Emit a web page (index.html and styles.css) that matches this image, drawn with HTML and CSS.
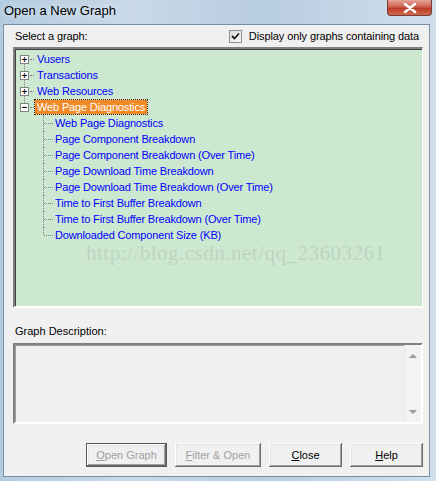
FILE: index.html
```html
<!DOCTYPE html>
<html lang="en">
<head>
    <meta charset="UTF-8">
    <title>Open a New Graph</title>
    <link rel="stylesheet" href="styles.css">
</head>
<body>

<div class="window">
    <div class="titlebar">
        <span class="title">Open a New Graph</span>
        <div class="close-btn">
            <svg width="14" height="10" viewBox="0 0 14 10"><path d="M2 1 L12 9 M12 1 L2 9" stroke="#fff" stroke-width="2.6" stroke-linecap="round"/></svg>
        </div>
    </div>

    <div class="client">
        <div class="header-row">
            <span>Select a graph:</span>
            <label class="check">
                <span class="checkbox">
                    <svg width="9" height="9" viewBox="0 0 9 9"><path d="M1 4 L3.5 6.5 L8 1.5" stroke="#1a1a1a" stroke-width="1.8" fill="none"/></svg>
                </span>
                Display only graphs containing data
            </label>
        </div>

        <div class="tree-box">
            <ul class="tree">
                <li class="node"><span class="exp">+</span><span class="stub"></span><span class="label">Vusers</span></li>
                <li class="node"><span class="exp">+</span><span class="stub"></span><span class="label">Transactions</span></li>
                <li class="node"><span class="exp">+</span><span class="stub"></span><span class="label">Web Resources</span></li>
                <li class="node open"><span class="exp">&minus;</span><span class="stub"></span><span class="label selected">Web Page Diagnostics</span></li>
            </ul>
            <ul class="children">
                <li>Web Page Diagnostics</li>
                <li>Page Component Breakdown</li>
                <li>Page Component Breakdown (Over Time)</li>
                <li>Page Download Time Breakdown</li>
                <li>Page Download Time Breakdown (Over Time)</li>
                <li>Time to First Buffer Breakdown</li>
                <li>Time to First Buffer Breakdown (Over Time)</li>
                <li>Downloaded Component Size (KB)</li>
            </ul>
            <div class="watermark">http://blog.csdn.net/qq_23603261</div>
        </div>

        <div class="desc-label">Graph Description:</div>
        <div class="desc-box">
            <div class="desc-text"></div>
            <div class="scrollbar">
                <span class="arrow up"></span>
                <span class="arrow down"></span>
            </div>
        </div>

        <div class="buttons">
            <button class="btn default" disabled><u>O</u>pen Graph</button>
            <button class="btn wide" disabled><u>F</u>ilter &amp; Open</button>
            <button class="btn"><u>C</u>lose</button>
            <button class="btn"><u>H</u>elp</button>
        </div>
    </div>
</div>

</body>
</html>
```

FILE: styles.css
```css
body, html {
    margin: 0;
    padding: 0;
    width: 436px;
    height: 481px;
    overflow: hidden;
    font-family: "Liberation Sans", Arial, sans-serif;
}
.window {
    width: 436px;
    height: 481px;
    box-sizing: border-box;
    padding: 0 6px 4px 3px;
    display: flex;
    flex-direction: column;
    background: linear-gradient(to right, #b3cbe0 0%, #c9d9e8 30%, #b8cde0 60%, #d0dfec 100%);
}
.titlebar {
    height: 24px;
    flex: none;
    display: flex;
    align-items: flex-start;
    justify-content: space-between;
}
.title {
    font-family: "Liberation Sans", Arial, sans-serif;
    font-size: 13px;
    color: #000;
    margin: 3px 0 0 1px;
    text-shadow: 0 0 6px #eef4fa;
}
.close-btn {
    width: 43px;
    height: 15px;
    margin-right: -2px;
    border: 1px solid #7a3a3a;
    border-top: none;
    border-radius: 0 0 4px 4px;
    background: linear-gradient(to bottom, #e7a59a 0%, #d0614f 45%, #bd3b26 55%, #d06a4f 100%);
    display: flex;
    align-items: center;
    justify-content: center;
}
.client {
    flex: 1;
    background: #f0f0f0;
    border: 1px solid #7b8fa3;
    padding: 0 6px 0 9px;
    display: flex;
    flex-direction: column;
    font-size: 11px;
    color: #000;
}
.header-row {
    height: 22px;
    flex: none;
    display: flex;
    align-items: center;
    justify-content: space-between;
    padding: 0 4px 0 2px;
    letter-spacing: -0.1px;
}
.check {
    display: flex;
    align-items: center;
    gap: 7px;
}
.checkbox {
    width: 11px;
    height: 11px;
    border: 1px solid #8e8f8f;
    background: linear-gradient(to bottom right, #dcdcdc, #fafafa);
    display: flex;
    align-items: center;
    justify-content: center;
}
.tree-box {
    height: 261px;
    flex: none;
    box-sizing: border-box;
    position: relative;
    background: #cde8d1;
    border-top: 2px solid #808080;
    border-left: 2px solid #808080;
    border-right: 1px solid #fff;
    border-bottom: 2px solid #fff;
    box-shadow: inset 1px 1px #404040;
    padding-top: 2px;
    font-size: 11px;
    letter-spacing: -0.15px;
    overflow: hidden;
}
.tree, .children {
    list-style: none;
    margin: 0;
    padding: 0;
    position: relative;
}
.node {
    height: 16px;
    display: flex;
    align-items: center;
    position: relative;
}
.node::before {
    content: "";
    position: absolute;
    left: 9px;
    top: 12px;
    height: 8px;
    border-left: 1px dotted #808080;
}
.node.open::before {
    display: none;
}
.exp {
    width: 7px;
    height: 7px;
    margin-left: 5px;
    border: 1px solid #808080;
    background: #fff;
    font-family: "DejaVu Sans Mono", monospace;
    font-size: 9px;
    font-weight: bold;
    line-height: 7px;
    text-align: center;
    letter-spacing: 0;
    color: #000;
    flex: none;
    overflow: hidden;
}
.stub {
    width: 4px;
    margin: 0 1px;
    border-top: 1px dotted #808080;
}
.label {
    color: #0000ff;
    padding: 0 2px;
    line-height: 14px;
}
.selected {
    background: #f08a28;
    color: #fff;
    outline: 1px dotted #402000;
}
.children li {
    height: 16px;
    line-height: 16px;
    padding-left: 40px;
    color: #0000ff;
    position: relative;
}
.children li::before {
    content: "";
    position: absolute;
    left: 28px;
    top: 0;
    height: 16px;
    border-left: 1px dotted #808080;
}
.children li:last-child::before {
    height: 8px;
}
.children li::after {
    content: "";
    position: absolute;
    left: 29px;
    top: 8px;
    width: 9px;
    border-top: 1px dotted #808080;
}
.watermark {
    position: absolute;
    left: 71px;
    top: 196px;
    font-family: "Liberation Serif", serif;
    font-size: 21px;
    line-height: 16px;
    letter-spacing: 0.5px;
    color: rgba(120, 140, 120, 0.22);
    white-space: nowrap;
}
.desc-label {
    margin-top: 16px;
    padding-left: 2px;
    height: 14px;
    line-height: 14px;
    flex: none;
}
.desc-box {
    height: 81px;
    margin-top: 5px;
    flex: none;
    box-sizing: border-box;
    display: flex;
    border-top: 2px solid #808080;
    border-left: 2px solid #808080;
    border-right: 2px solid #fff;
    border-bottom: 2px solid #fff;
    box-shadow: inset 1px 1px #a0a0a0;
    background: #f0f0f0;
}
.desc-text {
    flex: 1;
}
.scrollbar {
    width: 16px;
    border-left: 1px solid #e6e6e6;
    background: #f3f3f3;
    display: flex;
    flex-direction: column;
    justify-content: space-between;
    align-items: center;
    padding: 9px 0 8px;
}
.arrow {
    width: 0;
    height: 0;
    border-left: 4px solid transparent;
    border-right: 4px solid transparent;
}
.arrow.up {
    border-bottom: 4px solid #9a9a9a;
}
.arrow.down {
    border-top: 4px solid #9a9a9a;
}
.buttons {
    display: flex;
    justify-content: flex-end;
    gap: 8px;
    margin-top: 19px;
    padding-right: 0;
}
.btn {
    width: 73px;
    height: 24px;
    font-family: "Liberation Sans", Arial, sans-serif;
    font-size: 11px;
    color: #000;
    background: #f0f0f0;
    border: none;
    padding: 0;
    box-shadow: inset -1px -1px #696969, inset 1px 1px #fff, inset -2px -2px #a0a0a0, inset 2px 2px #e3e3e3;
}
.btn.wide {
    width: 86px;
}
.btn.default {
    width: 81px;
    border: 1px solid #5a5a5a;
}
.btn:disabled {
    color: #a0a0a0;
}
```
